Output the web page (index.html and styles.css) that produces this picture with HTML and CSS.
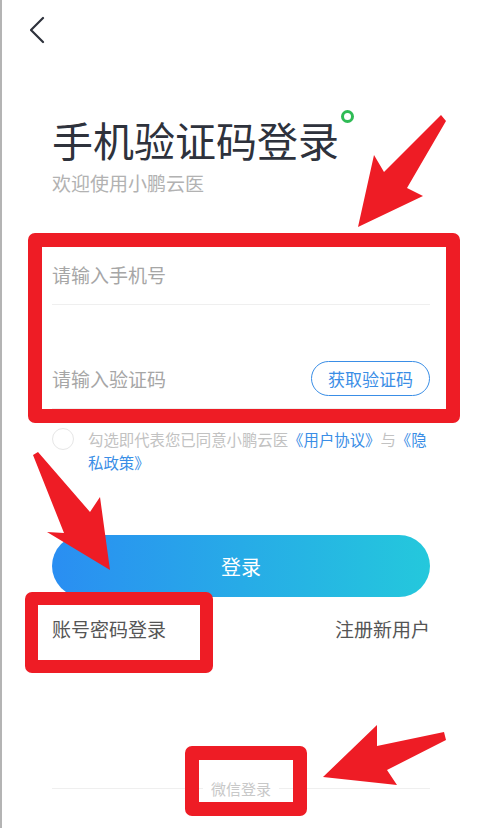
FILE: index.html
```html
<!DOCTYPE html>
<html lang="zh-CN">
<head>
  <meta charset="UTF-8" />
  <meta name="viewport" content="width=device-width, initial-scale=1.0" />
  <title>手机验证码登录</title>
  <link rel="stylesheet" href="styles.css">
</head>
<body>

  <div class="page">
    <div class="top-bar">
      <svg class="back" width="16" height="28" viewBox="0 0 16 28">
        <polyline points="13,2 1,14 13,26" fill="none" stroke="#2e323c" stroke-width="2.2" stroke-linecap="round" stroke-linejoin="round" />
      </svg>
    </div>

    <h1 class="title">手机验证码登录<span class="dot"></span></h1>
    <div class="subtitle">欢迎使用小鹏云医</div>

    <div class="form">
      <div class="field">
        <span class="placeholder">请输入手机号</span>
      </div>
      <div class="field code-field">
        <span class="placeholder">请输入验证码</span>
        <button class="code-btn">获取验证码</button>
      </div>
    </div>

    <div class="agreement">
      <span class="check"></span>
      <p>勾选即代表您已同意小鹏云医<a>《用户协议》</a>与<a>《隐私政策》</a></p>
    </div>

    <button class="login-btn">登录</button>

    <div class="links">
      <span>账号密码登录</span>
      <span>注册新用户</span>
    </div>

    <div class="other-login">
      <span>微信登录</span>
    </div>
  </div>

  <!-- annotations -->
  <div class="mark mark-form"></div>
  <div class="mark mark-account"></div>
  <div class="mark mark-wechat"></div>

  <svg class="arrows" width="480" height="828" viewBox="0 0 480 828">
    <polygon points="441,115 446,121 407,188 423,196 358,227 374,155 384,172" />
    <polygon points="33,455 38,452 90,512 100,497 110,570 47,532 64,533" />
    <polygon points="444,732 446,740 387,770 397,785 323,777 377,725 377,746" />
  </svg>

</body>
</html>
```

FILE: styles.css
```css
body {
  margin: 0;
  padding: 0;
  background-color: #fff;
  font-family: 'Noto Sans CJK SC', 'Noto Sans', sans-serif;
  color: #2e323c;
  text-spacing-trim: space-all;
}

.page {
  position: relative;
  min-height: 828px;
  box-sizing: border-box;
  border-left: 2px solid #b4b4b4;
  padding: 0 50px 0 50px;
}

.top-bar {
  height: 60px;
  padding-top: 16px;
  box-sizing: border-box;
  margin-left: -22px;
}

.back {
  display: block;
}

.title {
  margin: 55px 0 0;
  font-size: 41px;
  font-weight: 400;
  line-height: 48px;
  color: #2e323c;
}

.dot {
  display: inline-block;
  width: 7px;
  height: 7px;
  border: 3px solid #2fbb55;
  border-radius: 50%;
  vertical-align: top;
  margin: -5px 0 0 2px;
}

.subtitle {
  margin-top: 7px;
  font-size: 19px;
  line-height: 26px;
  color: #b2b2b2;
}

.form {
  margin-top: 48px;
}

.field {
  height: 60px;
  display: flex;
  align-items: center;
  justify-content: space-between;
  border-bottom: 1px solid #efefef;
}

.code-field {
  height: auto;
  padding: 56px 0 12px;
}

.placeholder {
  font-size: 19px;
  color: #a6a6a6;
}

.code-btn {
  height: 35px;
  padding: 0 16px;
  border: 1px solid #3a8ee6;
  border-radius: 18px;
  background: #fff;
  color: #3a8ee6;
  font-family: inherit;
  font-size: 17px;
  line-height: 33px;
}

.agreement {
  display: flex;
  gap: 14px;
  margin-top: 19px;
}

.check {
  flex: none;
  width: 20px;
  height: 20px;
  border: 1px solid #e6e6e6;
  border-radius: 50%;
}

.agreement p {
  margin: 0;
  font-size: 15.4px;
  line-height: 23px;
  color: #c2c2c2;
}

.agreement a {
  color: #3a8ee6;
}

.login-btn {
  display: block;
  width: 100%;
  height: 62px;
  margin-top: 61px;
  border: none;
  border-radius: 31px;
  background: linear-gradient(90deg, #2a8ef2, #24c8dc);
  color: #fff;
  font-family: inherit;
  font-size: 20px;
}

.links {
  display: flex;
  justify-content: space-between;
  margin-top: 19px;
  font-size: 19px;
  line-height: 26px;
  color: #555;
}

.other-login {
  position: relative;
  margin-top: 136px;
  text-align: center;
  line-height: 20px;
}

.other-login::before {
  content: '';
  position: absolute;
  left: 0;
  right: 0;
  top: 10px;
  border-top: 1px solid #efefef;
}

.other-login span {
  position: relative;
  padding: 0 8px;
  background: #fff;
  font-size: 15px;
  color: #c8c8c8;
}

/* red annotation boxes */
.mark {
  position: absolute;
  border: 14px solid #ee1c25;
  border-radius: 7px;
  box-sizing: border-box;
}

.mark-form {
  left: 28px;
  top: 233px;
  width: 432px;
  height: 190px;
}

.mark-account {
  left: 25px;
  top: 592px;
  width: 188px;
  height: 81px;
  border-width: 13px;
}

.mark-wechat {
  left: 185px;
  top: 746px;
  width: 122px;
  height: 70px;
}

.arrows {
  position: absolute;
  left: 0;
  top: 0;
  fill: #ee1c25;
}
```
